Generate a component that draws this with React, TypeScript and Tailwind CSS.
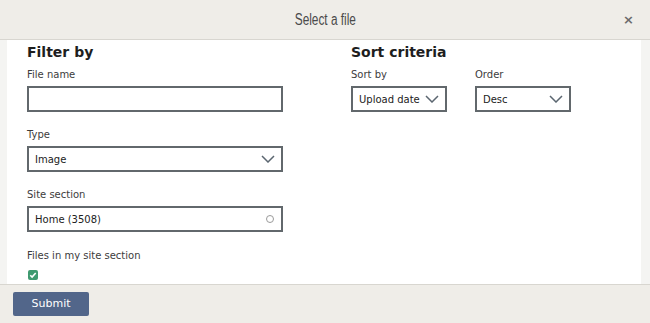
import type { ReactNode } from 'react';

function Chevron() {
  return (
    <svg width="14" height="8" viewBox="0 0 14 8" className="shrink-0">
      <path d="M1 1l6 6 6-6" fill="none" stroke="#5b6670" strokeWidth="1.5" />
    </svg>
  );
}

function Field({
  label,
  children,
  className = '',
  gap = 'mt-[5px]',
}: {
  label: string;
  children: ReactNode;
  className?: string;
  gap?: string;
}) {
  return (
    <div className={className}>
      <div className="h-[12px] text-[10px] leading-[12px] text-[#3c3c3c]">{label}</div>
      <div className={gap}>{children}</div>
    </div>
  );
}

function Box({ children, width }: { children?: ReactNode; width: string }) {
  return (
    <div
      className={`flex h-[26px] items-center justify-between border-2 border-[#62686c] bg-white pl-[6px] pr-[6px] text-[10px] text-[#222] ${width}`}
    >
      {children}
    </div>
  );
}

export default function App() {
  return (
    <div className="flex h-[323px] w-[650px] flex-col bg-[#f4f4f2] font-['DejaVu_Sans',sans-serif]">
      <header className="relative flex h-[40px] shrink-0 items-center justify-center border-b border-[#d8d6d0] bg-[#efede8]">
        <span className="inline-block scale-x-[0.74] font-['Liberation_Sans',sans-serif] text-[16px] text-[#4a4a4a]">
          Select a file
        </span>
        <span className="absolute right-[16px] top-[10px] text-[13px] font-bold text-[#6b6b6b]">×</span>
      </header>
      <main className="ml-[7px] mr-[9px] flex flex-1 gap-[48px] bg-white pl-[20px] pt-[3px]">
        <section className="w-[256px]">
          <h2 className="text-[14px] font-bold leading-[18px] text-[#1e1e1e]">Filter by</h2>
          <Field label="File name" className="mt-[8px]">
            <Box width="w-[256px]" />
          </Field>
          <Field label="Type" className="mt-[17px]">
            <Box width="w-[256px]">
              <span>Image</span>
              <Chevron />
            </Box>
          </Field>
          <Field label="Site section" className="mt-[17px]">
            <Box width="w-[256px]">
              <span>Home (3508)</span>
              <span className="mr-[1px] h-[8px] w-[8px] rounded-full border border-[#9a9a9a]" />
            </Box>
          </Field>
          <Field label="Files in my site section" className="mt-[18px]" gap="mt-[8px]">
            <span className="ml-[1px] flex h-[10px] w-[10px] items-center justify-center rounded-[2px] bg-[#3f9a70]">
              <svg width="8" height="8" viewBox="0 0 8 8">
                <path d="M1.3 4.2l1.8 1.8 3.6-4" fill="none" stroke="white" strokeWidth="1.6" />
              </svg>
            </span>
          </Field>
        </section>
        <section>
          <h2 className="ml-[20px] text-[14px] font-bold leading-[18px] text-[#1e1e1e]">Sort criteria</h2>
          <div className="ml-[20px] mt-[8px] flex gap-[28px]">
            <Field label="Sort by">
              <Box width="w-[96px]">
                <span>Upload date</span>
                <Chevron />
              </Box>
            </Field>
            <Field label="Order">
              <Box width="w-[96px]">
                <span>Desc</span>
                <Chevron />
              </Box>
            </Field>
          </div>
        </section>
      </main>
      <footer className="flex h-[39px] shrink-0 items-center border-t border-[#d8d6d0] bg-[#efede8] pl-[13px]">
        <button className="h-[24px] w-[76px] rounded-[2px] bg-[#52668a] text-[11px] text-white">Submit</button>
      </footer>
    </div>
  );
}
